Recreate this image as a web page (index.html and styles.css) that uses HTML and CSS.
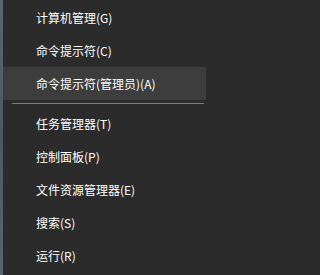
FILE: index.html
```html
<!DOCTYPE html>
<html lang="zh-CN">
<head>
<meta charset="utf-8">
<link rel="stylesheet" href="styles.css">
</head>
<body>
<div class="screen">
  <div class="desktop-edge"></div>
  <div class="menu">
    <div class="item">计算机管理(G)</div>
    <div class="item">命令提示符(C)</div>
    <div class="item hover">命令提示符(管理员)(A)</div>
    <div class="sep"></div>
    <div class="item">任务管理器(T)</div>
    <div class="item">控制面板(P)</div>
    <div class="item">文件资源管理器(E)</div>
    <div class="item">搜索(S)</div>
    <div class="item">运行(R)</div>
  </div>
</div>
</body>
</html>
```
FILE: styles.css
```css
html, body {
  margin: 0;
  padding: 0;
  background: #2b2b2b;
}
.screen {
  display: flex;
  width: 206px;
  height: 275px;
  overflow: hidden;
}
.desktop-edge {
  width: 3px;
  flex: none;
  background: linear-gradient(#5b6572, #4e5864 50%, #5a6470);
}
.menu {
  flex: 1;
  background: #2b2b2b;
  padding-top: 1px;
  display: flex;
  flex-direction: column;
}
.item {
  height: 33px;
  line-height: 33px;
  padding-left: 33px;
  color: #ffffff;
  font-family: "Noto Sans CJK SC", "Noto Sans", sans-serif;
  font-size: 12px;
  white-space: nowrap;
}
.item.hover {
  background: #3d3d3d;
}
.sep {
  height: 1px;
  background: #7d7d7d;
  margin: 3px 2px 3px 9px;
}
```
